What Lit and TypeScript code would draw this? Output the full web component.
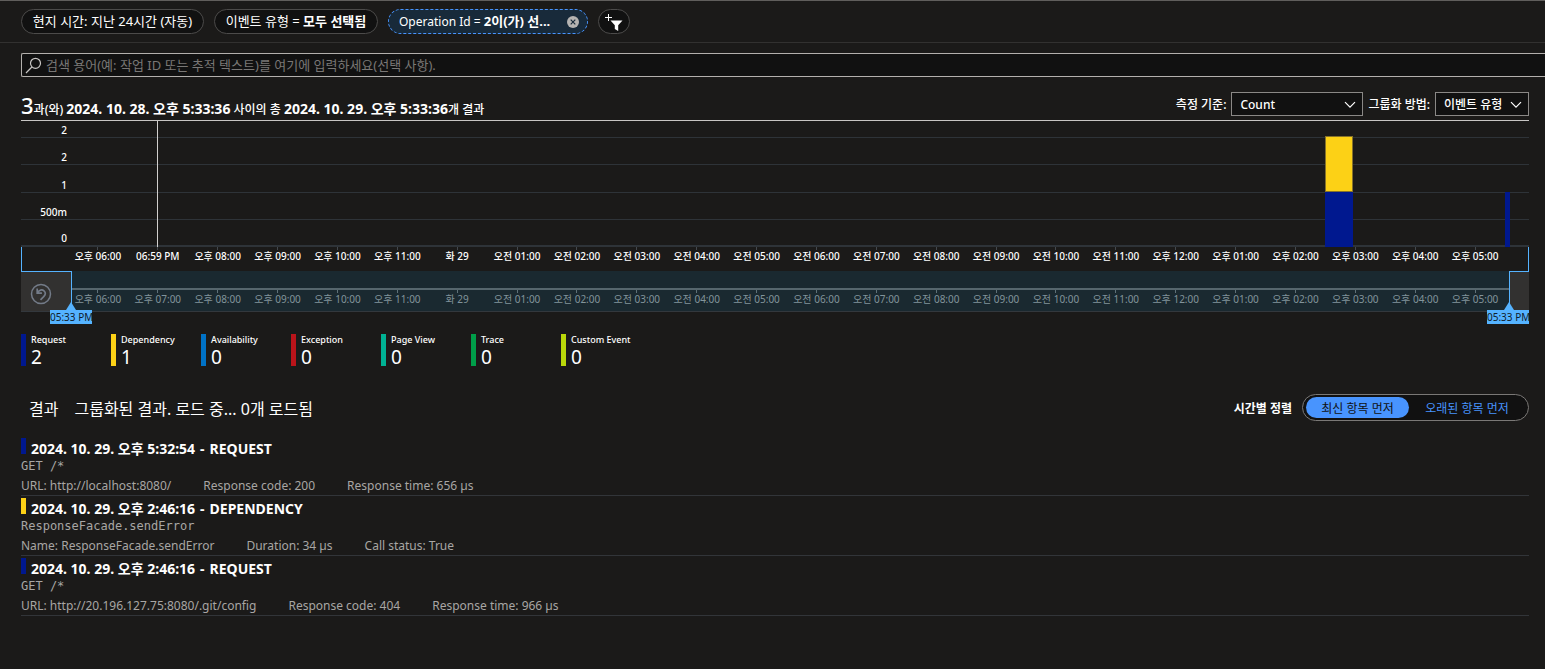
import { LitElement, html, css } from "lit";
import { customElement, state } from "lit/decorators.js";
import { classMap } from "lit/directives/class-map.js";
import { styleMap } from "lit/directives/style-map.js";

const HOURS = [
  "오후 06:00", "오후 07:00", "오후 08:00", "오후 09:00", "오후 10:00", "오후 11:00",
  "화 29", "오전 01:00", "오전 02:00", "오전 03:00", "오전 04:00", "오전 05:00",
  "오전 06:00", "오전 07:00", "오전 08:00", "오전 09:00", "오전 10:00", "오전 11:00",
  "오후 12:00", "오후 01:00", "오후 02:00", "오후 03:00", "오후 04:00", "오후 05:00",
];
const CURSOR_HOUR = 1;
const CURSOR_LABEL = "06:59 PM";
const LEVELS = ["2", "2", "1", "500m", "0"];

const COLORS = {
  request: "#00188f",
  dependency: "#fcd116",
  availability: "#0072c6",
  exception: "#ba141a",
  pageView: "#00b294",
  trace: "#009e49",
  customEvent: "#bad80a",
};

// start and width are percentages of the time range; stacks are in units of the count
const BARS = [
  { start: 87.2, width: 1.95, stack: [{ color: COLORS.dependency, count: 1, outlined: true }, { color: COLORS.request, count: 1, outlined: false }] },
  { start: 99.7, width: 0.35, stack: [{ color: COLORS.request, count: 1, outlined: false }] },
];
const MAX_COUNT = 2;

const LEGEND = [
  { name: "Request", count: 2, color: COLORS.request },
  { name: "Dependency", count: 1, color: COLORS.dependency },
  { name: "Availability", count: 0, color: COLORS.availability },
  { name: "Exception", count: 0, color: COLORS.exception },
  { name: "Page View", count: 0, color: COLORS.pageView },
  { name: "Trace", count: 0, color: COLORS.trace },
  { name: "Custom Event", count: 0, color: COLORS.customEvent },
];

const RESULTS = [
  { time: "2024. 10. 29. 오후 5:32:54", type: "REQUEST", color: COLORS.request, title: "GET /*",
    facts: ["URL: http://localhost:8080/", "Response code: 200", "Response time: 656 µs"] },
  { time: "2024. 10. 29. 오후 2:46:16", type: "DEPENDENCY", color: COLORS.dependency, title: "ResponseFacade.sendError",
    facts: ["Name: ResponseFacade.sendError", "Duration: 34 µs", "Call status: True"] },
  { time: "2024. 10. 29. 오후 2:46:16", type: "REQUEST", color: COLORS.request, title: "GET /*",
    facts: ["URL: http://20.196.127.75:8080/.git/config", "Response code: 404", "Response time: 966 µs"] },
];

@customElement("filter-bar")
export class FilterBar extends LitElement {
  static styles = css`
    :host { display: flex; gap: 10px; padding: 8px 21px; border-bottom: 1px solid #323130; }
    button { font: inherit; color: inherit; background: none; border: 0; padding: 0; cursor: pointer; white-space: nowrap; }
    .pill { box-sizing: border-box; height: 25px; padding: 0; border: 1px solid #4c4b4a; border-radius: 13px; background: #111; color: #fff; font-size: 13px; line-height: 23px; }
    .wide { width: 164px; }
    .time { width: 183px; }
    .active { display: flex; align-items: center; gap: 10px; width: 200px; padding: 0 8px 0 10px; border: 1px dashed #4894fe; background: #182a3a; }
    .text { flex: 1; font-size: 12px; text-align: left; }
    .text b { font-size: 13px; }
    .close { display: flex; }
    .add { width: 32px; padding: 0; display: flex; align-items: center; justify-content: center; }
  `;
  render() {
    return html`
      <button class="pill time">현지 시간: 지난 24시간 (자동)</button>
      <button class="pill wide">이벤트 유형 = <b>모두 선택됨</b></button>
      <div class="pill active">
        <button class="text">Operation Id = <b>2이(가) 선...</b></button>
        <button class="close" aria-label="필터 제거">
          <svg width="12" height="12" viewBox="0 0 12 12"><circle cx="6" cy="6" r="6" fill="#b5b3b1" /><path d="M3.7 3.7l4.6 4.6M8.3 3.7L3.7 8.3" stroke="#182a3a" stroke-width="1.2" /></svg>
        </button>
      </div>
      <button class="pill add" aria-label="필터 추가">
        <svg width="20" height="18" viewBox="0 0 20 18"><path d="M4.500 1v7M1 4.500h7" stroke="#fff" stroke-width="1" /><path d="M6.500 7.500h12l-4.300 4.700V18l-3.400-2v-3.800z" fill="#fff" /></svg>
      </button>
    `;
  }
}

@customElement("time-chart")
export class TimeChart extends LitElement {
  static styles = css`
    :host { display: block; font-size: 10px; }
    .plot { position: relative; display: grid; grid-template-rows: 17px repeat(4, 1fr); height: 126px; }
    .level { display: flex; flex-direction: column; justify-content: flex-end; border-bottom: 1px solid #2e3338; }
    .level:last-of-type { border-bottom-width: 2px; }
    .level span { width: 46px; line-height: 13px; text-align: right; color: #fff; font-weight: 500; }
    .series { position: absolute; inset: 15px 20px 0 50px; }
    .bar { position: absolute; bottom: 0; height: 100%; display: flex; flex-direction: column; justify-content: flex-end; }
    .block { box-sizing: border-box; }
    .outlined { border: 1px solid #86722a; }
    .hours { display: grid; grid-template-columns: repeat(24, 1fr); }
    .hour { display: flex; flex-direction: column; align-items: center; line-height: 13px; white-space: nowrap; color: #fff; font-weight: 500; }
    .hour::before { content: ""; width: 1px; height: 3px; background: #43484d; }
    .cursor { position: relative; }
    .cursor i { position: absolute; bottom: 100%; left: calc(50% - 1px); width: 1px; height: 126px; background: #d2d0ce; }
    .axis { height: 24px; border: solid #55b3ff; border-width: 0 1px; }
    .axis .hours { padding: 0 23px 0 46px; }
    .overview { position: relative; display: flex; height: 40px; background: #1a2930; border-bottom: 1px solid #33383d; }
    .range { flex: 1; padding-top: 17px; }
    .range .hours { margin: 0 4px 0 -4px; }
    .range .hour { color: #82949b; font-weight: 400; }
    .range .hour::before { background: #5f7178; }
    .rule { height: 2px; background: #56666d; }
    .side { box-sizing: border-box; position: relative; background: #323130; border-top: 1px solid #55b3ff; }
    .before { width: 51px; border-right: 1px solid #55b3ff; display: flex; align-items: center; padding: 4px 0 0 9px; }
    .after { width: 20px; border-left: 1px solid #55b3ff; }
    .undo { display: flex; padding: 0; border: 0; background: none; cursor: pointer; }
    .grip { position: absolute; top: 30px; width: 10px; height: 8px; background: #55b3ff; clip-path: polygon(50% 0, 100% 100%, 0 100%); }
    .stamp { position: absolute; top: 38px; width: 42px; line-height: 14px; background: #55b3ff; color: #10202c; text-align: center; white-space: nowrap; }
    .before .grip { right: -5px; } .before .stamp { right: -21px; }
    .after .grip { left: -6px; } .after .stamp { right: 0; }
  `;
  private hours(cursor: boolean) {
    return html`<div class="hours">${HOURS.map((label, i) =>
      cursor && i === CURSOR_HOUR
        ? html`<span class="hour cursor"><i></i>${CURSOR_LABEL}</span>`
        : html`<span class="hour">${label}</span>`)}</div>`;
  }
  render() {
    return html`
      <div class="plot">
        ${LEVELS.map((level) => html`<div class="level"><span>${level}</span></div>`)}
        <section class="series">
          ${BARS.map((bar) => html`
            <div class="bar" style=${styleMap({ left: `${bar.start}%`, width: `${bar.width}%` })}>
              ${bar.stack.map((part) => html`<div class=${classMap({ block: true, outlined: part.outlined })}
                style=${styleMap({ background: part.color, height: `${(part.count / MAX_COUNT) * 100}%` })}></div>`)}
            </div>`)}
        </section>
      </div>
      <div class="axis">${this.hours(true)}</div>
      <div class="overview">
        <div class="side before">
          <button class="undo" aria-label="범위 초기화">
            <svg width="22" height="22" viewBox="0 0 22 22" fill="none" stroke="#737b88" stroke-width="1.5"><circle cx="11" cy="11" r="9.500" /><path d="M7.200 5.500v4.700h4.700M7.500 9.900c1.500-3 4.500-3.700 6.500-2.100 2 1.700 1.600 4-.3 5.900l-3.200 3.100" stroke-width="1.700" /></svg>
          </button>
          <span class="grip"></span><span class="stamp">05:33 PM</span>
        </div>
        <div class="range"><div class="rule"></div>${this.hours(false)}</div>
        <div class="side after"><span class="grip"></span><span class="stamp">05:33 PM</span></div>
      </div>
    `;
  }
}

@customElement("result-list")
export class ResultList extends LitElement {
  static styles = css`
    :host { display: block; }
    ul { list-style: none; margin: 0; padding: 0; }
    li { border-bottom: 1px solid #323539; padding-top: 2px; }
    .head { display: flex; gap: 5px; height: 20px; }
    .mark { width: 5px; height: 16px; }
    h3 { display: flex; gap: 5px; margin: 0; font-size: 14px; line-height: 21px; font-weight: 700; color: #fff; }
    .title { font-family: "DejaVu Sans Mono", monospace; font-size: 12px; line-height: 17px; color: #a8a6a4; }
    .facts { display: flex; gap: 32px; height: 20px; font-size: 12px; line-height: 22px; color: #a8a6a4; }
  `;
  render() {
    return html`<ul>${RESULTS.map((r) => html`
      <li>
        <div class="head"><span class="mark" style=${styleMap({ background: r.color })}></span><h3><span>${r.time}</span> <span>-</span> <span>${r.type}</span></h3></div>
        <div class="title">${r.title}</div>
        <div class="facts">${r.facts.map((fact) => html`<span>${fact}</span>`)}</div>
      </li>`)}</ul>`;
  }
}

@customElement("app-root")
export class AppRoot extends LitElement {
  @state() private newestFirst = true;

  static styles = css`
    :host { display: block; box-sizing: border-box; min-height: 100vh; overflow: hidden; border-top: 1px solid #605e5c; background: #1b1a19; color: #fff; font: 12px "Noto Sans", "Noto Sans CJK KR", sans-serif; }
    .search { display: flex; align-items: center; gap: 4px; box-sizing: border-box; height: 24px; margin: 10px 0 0 21px; padding-left: 3px; border: 1px solid #b3b0ad; border-right: 0; border-radius: 2px 0 0 2px; background: #111; }
    .search input { flex: 1; border: 0; outline: 0; padding: 0; background: none; color: #fff; font: inherit; font-size: 13px; }
    .search input::placeholder { color: #797775; opacity: 1; }
    .body { padding: 0 16px 0 21px; }
    .summary { display: flex; justify-content: space-between; height: 43px; border-bottom: 1px solid #c8c6c4; }
    h2 { margin: 0; font-weight: 500; white-space: nowrap; }
    .found { padding-top: 13px; font-size: 12px; line-height: 30px; }
    .found b { font-size: 14px; }
    .found .total { font-size: 22px; }
    .options { display: flex; align-items: center; gap: 5px; height: 42px; padding-top: 12px; box-sizing: border-box; font-weight: 500; }
    .select { position: relative; display: flex; }
    .select svg { position: absolute; right: 7px; top: 9px; pointer-events: none; }
    select { appearance: none; height: 24px; padding: 0 8px; border: 1px solid #8a8886; border-radius: 0; background: #111; color: #fff; font: inherit; }
    .measure { width: 132px; }
    .group { width: 94px; }
    .legend { display: flex; margin: 22px 0 0; padding: 0; list-style: none; }
    .legend li { display: flex; gap: 5px; width: 90px; height: 32px; }
    .swatch { width: 5px; }
    .name { display: block; font-size: 9px; line-height: 12px; font-weight: 500; white-space: nowrap; }
    .count { display: block; font-size: 19px; line-height: 22px; }
    .results { display: flex; align-items: center; justify-content: space-between; height: 27px; margin-top: 28px; padding-left: 8px; }
    .status { display: flex; gap: 16px; font-size: 16px; font-weight: 400; }
    .sort { display: flex; align-items: center; gap: 10px; font-weight: 700; }
    .toggle { box-sizing: border-box; display: flex; width: 227px; height: 27px; padding: 2px 3px; border: 1px solid #7a7876; border-radius: 14px; background: #111; }
    .toggle button { width: 103px; padding: 0; border: 0; border-radius: 11px; background: none; color: #4894fe; font: inherit; font-weight: 400; cursor: pointer; }
    .toggle button + button { flex: 1; }
    .toggle .on { background: #4894fe; color: #111; }
    result-list { margin-top: 15px; }
  `;

  private chevron() {
    return html`<svg width="12" height="8" viewBox="0 0 12 8" fill="none" stroke="#fff" stroke-width="1.2"><path d="M1 1.200l5 5 5-5" /></svg>`;
  }

  render() {
    return html`
      <filter-bar></filter-bar>
      <label class="search">
        <svg width="17" height="17" viewBox="0 0 17 17" fill="none" stroke="#c8c6c4" stroke-width="1.2"><circle cx="10.500" cy="6.300" r="5" /><path d="M6.900 10L1 16" /></svg>
        <input type="text" placeholder="검색 용어(예: 작업 ID 또는 추적 텍스트)를 여기에 입력하세요(선택 사항)." aria-label="검색" />
      </label>
      <main class="body">
        <header class="summary">
          <h2 class="found"><span class="total">3</span>과(와) <b>2024. 10. 28. 오후 5:33:36</b> 사이의 총 <b>2024. 10. 29. 오후 5:33:36</b>개 결과</h2>
          <div class="options">
            <label for="measure">측정 기준:</label>
            <span class="select"><select id="measure" class="measure"><option>Count</option></select>${this.chevron()}</span>
            <label for="group">그룹화 방법:</label>
            <span class="select"><select id="group" class="group"><option>이벤트 유형</option></select>${this.chevron()}</span>
          </div>
        </header>
        <time-chart></time-chart>
        <ul class="legend">
          ${LEGEND.map((item) => html`<li><span class="swatch" style=${styleMap({ background: item.color })}></span>
            <div><span class="name">${item.name}</span><span class="count">${item.count}</span></div></li>`)}
        </ul>
        <div class="results">
          <h2 class="status"><span>결과</span><span>그룹화된 결과. 로드 중... 0개 로드됨</span></h2>
          <div class="sort">
            <span id="sort">시간별 정렬</span>
            <div class="toggle" role="group" aria-labelledby="sort">
              <button class=${classMap({ on: this.newestFirst })} aria-pressed=${this.newestFirst} @click=${() => (this.newestFirst = true)}>최신 항목 먼저</button>
              <button class=${classMap({ on: !this.newestFirst })} aria-pressed=${!this.newestFirst} @click=${() => (this.newestFirst = false)}>오래된 항목 먼저</button>
            </div>
          </div>
        </div>
        <result-list></result-list>
      </main>
    `;
  }
}
